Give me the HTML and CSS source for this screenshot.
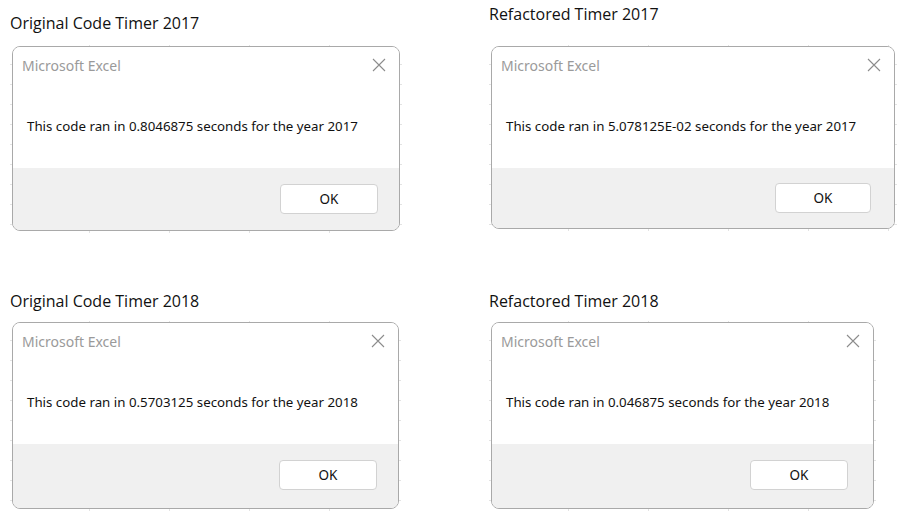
FILE: index.html
```html
<!DOCTYPE html>
<html>
<head>
<meta charset="utf-8">
<link rel="stylesheet" href="styles.css">
</head>
<body>
<div class="page">
  <section class="panel p1">
    <h2 class="heading">Original Code Timer 2017</h2>
    <div class="shot">
      <div class="dialog">
        <div class="dialog-body">
          <div class="titlebar">
            <span class="title">Microsoft Excel</span>
            <svg class="close" width="14" height="14" viewBox="0 0 14 14"><path d="M1 1L13 13M13 1L1 13" stroke="#8c8c8c" stroke-width="1.1" fill="none"/></svg>
          </div>
          <p class="message">This code ran in 0.8046875 seconds for the year 2017</p>
        </div>
        <div class="footer"><button class="ok">OK</button></div>
      </div>
    </div>
  </section>
  <section class="panel p2">
    <h2 class="heading">Refactored Timer 2017</h2>
    <div class="shot">
      <div class="dialog">
        <div class="dialog-body">
          <div class="titlebar">
            <span class="title">Microsoft Excel</span>
            <svg class="close" width="14" height="14" viewBox="0 0 14 14"><path d="M1 1L13 13M13 1L1 13" stroke="#8c8c8c" stroke-width="1.1" fill="none"/></svg>
          </div>
          <p class="message">This code ran in 5.078125E-02 seconds for the year 2017</p>
        </div>
        <div class="footer"><button class="ok">OK</button></div>
      </div>
    </div>
  </section>
  <section class="panel p3">
    <h2 class="heading">Original Code Timer 2018</h2>
    <div class="shot">
      <div class="dialog">
        <div class="dialog-body">
          <div class="titlebar">
            <span class="title">Microsoft Excel</span>
            <svg class="close" width="14" height="14" viewBox="0 0 14 14"><path d="M1 1L13 13M13 1L1 13" stroke="#8c8c8c" stroke-width="1.1" fill="none"/></svg>
          </div>
          <p class="message">This code ran in 0.5703125 seconds for the year 2018</p>
        </div>
        <div class="footer"><button class="ok">OK</button></div>
      </div>
    </div>
  </section>
  <section class="panel p4">
    <h2 class="heading">Refactored Timer 2018</h2>
    <div class="shot">
      <div class="dialog">
        <div class="dialog-body">
          <div class="titlebar">
            <span class="title">Microsoft Excel</span>
            <svg class="close" width="14" height="14" viewBox="0 0 14 14"><path d="M1 1L13 13M13 1L1 13" stroke="#8c8c8c" stroke-width="1.1" fill="none"/></svg>
          </div>
          <p class="message">This code ran in 0.046875 seconds for the year 2018</p>
        </div>
        <div class="footer"><button class="ok">OK</button></div>
      </div>
    </div>
  </section>
</div>
</body>
</html>
```

FILE: styles.css
```css
html, body {
  margin: 0;
  padding: 0;
  background: #ffffff;
}
body {
  width: 908px;
  height: 517px;
  overflow: hidden;
  font-family: "Noto Sans", "Open Sans", sans-serif;
}
.page {
  display: grid;
  grid-template-columns: 479px 429px;
  grid-template-rows: 275px 242px;
}
.panel {
  display: flex;
  flex-direction: column;
}
.heading {
  margin: 0;
  font-family: "Open Sans", "Noto Sans", sans-serif;
  font-weight: 400;
  font-size: 16px;
  line-height: 20px;
  color: #111111;
}
.shot {
  align-self: flex-start;
  padding: 1px 2px 2px 2px;
  background-color: #ffffff;
  background-image:
    repeating-linear-gradient(to right, transparent 0 79px, #e3e3e3 79px 80px),
    repeating-linear-gradient(to bottom, transparent 0 19px, #e3e3e3 19px 20px);
}
.dialog {
  display: flex;
  flex-direction: column;
  border: 1px solid #a9a9a9;
  border-radius: 8px;
  overflow: hidden;
  background: #ffffff;
  box-sizing: border-box;
}
.dialog-body {
  height: 121px;
  background: #ffffff;
  padding: 0 13px 0 9px;
  box-sizing: border-box;
}
.titlebar {
  display: flex;
  justify-content: space-between;
  align-items: center;
  height: 32px;
  padding-top: 2px;
}
.title {
  font-size: 14px;
  color: #9a9a9a;
}
.close {
  display: block;
}
.message {
  margin: 36px 0 0 5px;
  font-size: 13.3px;
  line-height: 18px;
  color: #111111;
}
.footer {
  flex: 1;
  background: #f0f0f0;
  display: flex;
  justify-content: flex-end;
  align-items: flex-start;
  padding-top: 16px;
  padding-right: 21px;
}
.ok {
  width: 98px;
  height: 30px;
  background: #ffffff;
  border: 1px solid #d2d2d2;
  border-radius: 4px;
  font-family: "Noto Sans", "Open Sans", sans-serif;
  font-size: 13.5px;
  color: #111111;
  padding: 0;
}

/* panel placement */
.p1 { padding: 13px 0 0 10px; }
.p1 .heading { margin-bottom: 12px; }
.p1 .dialog { width: 388px; height: 185px; }

.p2 { padding: 4px 0 0 10px; }
.p2 .heading { margin-bottom: 21px; }
.p2 .dialog { width: 404px; height: 183px; }
.p2 .footer { padding-right: 23px; padding-top: 15px; }
.p2 .ok { width: 96px; height: 30px; }

.p3 { padding: 16px 0 0 10px; }
.p3 .heading { margin-bottom: 10px; }
.p3 .dialog { width: 387px; height: 187px; }

.p4 { padding: 16px 0 0 10px; }
.p4 .heading { margin-bottom: 10px; }
.p4 .dialog { width: 383px; height: 187px; }
.p4 .footer { padding-right: 25px; }
```
